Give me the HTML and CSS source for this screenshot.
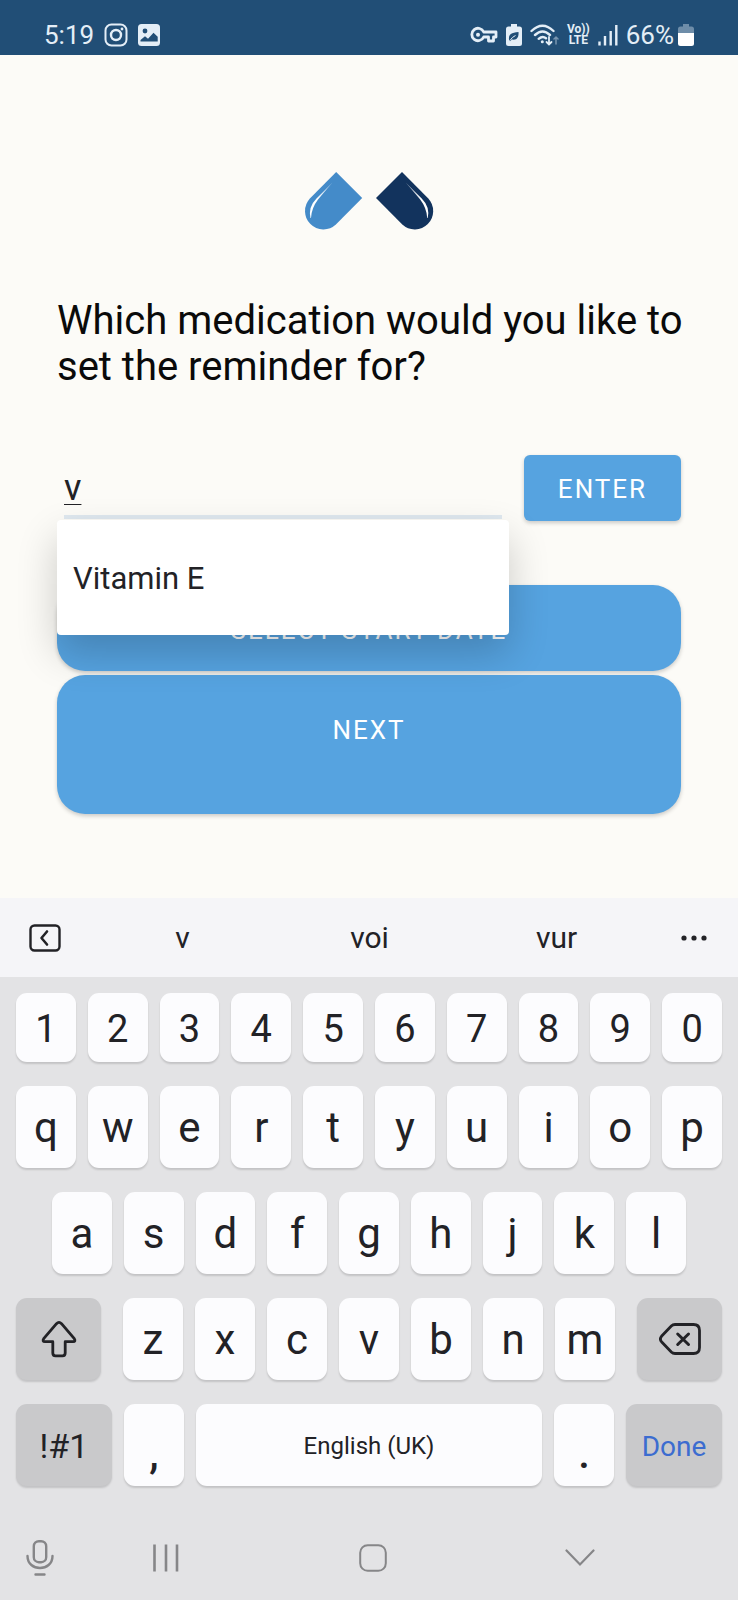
FILE: index.html
```html
<!DOCTYPE html>
<html lang="en">
<head>
<meta charset="utf-8">
<meta name="viewport" content="width=device-width, initial-scale=1">
<title>Medication reminder</title>
<link rel="stylesheet" href="styles.css">
</head>
<body>
<div class="phone">
  <header class="status">
    <div class="status-group">
      <span class="status-text">5:19</span>
      <svg class="status-insta" width="24" height="24" viewBox="0 0 24 24" fill="none" stroke="currentColor" stroke-width="2">
        <rect x="1.5" y="1.5" width="21" height="21" rx="6"/><circle cx="12" cy="12" r="5" stroke-width="2.4"/><circle cx="18" cy="6" r="1.4" fill="currentColor" stroke="none"/>
      </svg>
      <svg class="status-photo" width="22" height="22" viewBox="0 0 22 22">
        <rect width="22" height="22" rx="3.5" fill="currentColor"/>
        <circle cx="7" cy="7" r="2.4" fill="#214e76"/>
        <path d="M2.5 17.5v-1.500l4.500-3.800 3 2.600 5.500-6 4.200 4v4.700z" fill="#214e76"/>
      </svg>
    </div>
    <div class="status-group status-right">
      <svg width="28" height="18" viewBox="0 0 28 18" fill="none" stroke="currentColor" stroke-width="2.800" stroke-linejoin="round">
        <path d="M13.700 6H26v5h-2.500v4h-5v-4h-4.800A6.200 6.200 0 1 1 13.700 6z"/><circle cx="8" cy="8.700" r="2" fill="currentColor" stroke="none"/>
      </svg>
      <svg width="16" height="22" viewBox="0 0 16 22">
        <path d="M5 0h6v2.500h2.500q2.500 0 2.500 2.500v14.500q0 2.500-2.500 2.500h-11Q0 22 0 19.500V5Q0 2.500 2.500 2.500H5z" fill="currentColor"/>
        <path d="M3 15.500c-.6-5 2.500-7 9.500-7.500.5 5-1.500 8.500-6.500 7.600l-2 1.600z" fill="#214e76"/><path d="M4 16.500q2-3.500 5.500-5" fill="none" stroke="#e4eef7"/>
      </svg>
      <svg width="29" height="22" viewBox="0 0 29 22" fill="none" stroke="currentColor" stroke-width="2.400" stroke-linecap="round">
        <path d="M1.500 7Q12.500-3.500 23.500 7M5 11q7.500-7 15 0M8.700 14.800q3.800-3.400 7.300-.6"/><circle cx="12.300" cy="17.800" r="1.500" fill="currentColor" stroke="none"/>
        <path d="M19 13v7M16.500 18l2.500 2.500 2.500-2.500" stroke-width="1.800"/><path d="M26 20v-7M24 15l2-2 2 2" stroke-width="1.500" opacity=".45"/>
      </svg>
      <span class="volte"><span>Vo))</span><span>LTE</span></span>
      <svg width="20" height="22" viewBox="0 0 20 22" fill="none" stroke="currentColor" stroke-width="2.400">
        <path d="M1.500 21.500v-4M7 21.500V12M12.700 21.500V7M18.300 21.500V1"/>
      </svg>
      <span class="status-percent">66%</span>
      <svg class="status-battery" width="16" height="22" viewBox="0 0 16 22">
        <path d="M5 0h6v2.500h2.500q2.500 0 2.500 2.500v4H0V5Q0 2.500 2.500 2.500H5z" fill="currentColor" opacity=".4"/><path d="M0 9h16v10.500q0 2.500-2.500 2.500h-11Q0 22 0 19.500z" fill="#fff"/>
      </svg>
    </div>
  </header>

  <main class="screen">
    <svg class="logo" width="160" height="80" viewBox="0 0 160 80">
      <defs>
        <linearGradient id="shine" x1="1" y1="0" x2="0" y2=".6"><stop offset="0" stop-color="#fff" stop-opacity=".5"/><stop offset=".7" stop-color="#fff"/></linearGradient>
        <path id="half" d="M47.200 12L73.200 38 46.900 64.600A18.400 18.400 0 0 1 20.900 38.600z"/>
        <path id="gleam" d="M43.500 22.500L27.500 38.500Q19 47 21.500 58H22Q22.500 48 29 39.500z" fill="url(#shine)"/>
      </defs>
      <use href="#half" fill="#448bc9"/><use href="#gleam"/>
      <g transform="translate(160.200 0) scale(-1 1)"><use href="#half" fill="#12335d"/><use href="#gleam"/></g>
    </svg>

    <h1 class="question"><label for="medication">Which medication would you like to set the reminder for?</label></h1>

    <form class="form">
      <div class="entry">
        <div class="field">
          <input class="field-input" id="medication" type="text" value="v" autocomplete="off">
          <ul class="options"><li><button class="option" type="button">Vitamin E</button></li></ul>
        </div>
        <button class="button button-enter" type="button">ENTER</button>
      </div>
      <button class="button button-date" type="button">SELECT START DATE</button>
      <button class="button button-next" type="button">NEXT</button>
    </form>
  </main>

  <section class="keyboard" aria-label="Keyboard">
    <div class="suggestions">
      <button class="plain" type="button" aria-label="Show toolbar"><svg width="32" height="28" viewBox="0 0 32 28" fill="none" stroke="currentColor" stroke-width="2.400" stroke-linecap="round" stroke-linejoin="round"><rect x="1.500" y="1.500" width="29" height="25" rx="4"/><path d="M18 7.500L12.500 14l5.500 6.500" stroke-width="2.600"/></svg></button>
      <button class="plain" type="button">v</button>
      <button class="plain" type="button">voi</button>
      <button class="plain" type="button">vur</button>
      <button class="plain" type="button" aria-label="More"><svg width="26" height="6" viewBox="0 0 26 6" fill="currentColor"><circle cx="3" cy="3" r="2.600"/><circle cx="13" cy="3" r="2.600"/><circle cx="23" cy="3" r="2.600"/></svg></button>
    </div>
    <div class="keys">
      <div class="row row-digits">
        <button class="key">1</button><button class="key">2</button><button class="key">3</button><button class="key">4</button><button class="key">5</button><button class="key">6</button><button class="key">7</button><button class="key">8</button><button class="key">9</button><button class="key">0</button>
      </div>
      <div class="row">
        <button class="key">q</button><button class="key">w</button><button class="key">e</button><button class="key">r</button><button class="key">t</button><button class="key">y</button><button class="key">u</button><button class="key">i</button><button class="key">o</button><button class="key">p</button>
      </div>
      <div class="row row-home">
        <button class="key">a</button><button class="key">s</button><button class="key">d</button><button class="key">f</button><button class="key">g</button><button class="key">h</button><button class="key">j</button><button class="key">k</button><button class="key">l</button>
      </div>
      <div class="row row-shift">
        <button class="key key-dark key-shift" aria-label="Shift"><svg width="36" height="38" viewBox="0 0 36 38" fill="none" stroke="currentColor" stroke-width="2.800" stroke-linejoin="round"><path d="M15.500 3.700q2.500-2.700 5 0L33.300 18.700q1.700 2.800-1.300 3h-7.800V33q0 2.800-2.700 2.800h-7q-2.700 0-2.700-2.800V21.700H4q-3-.2-1.300-3z"/></svg></button>
        <button class="key">z</button><button class="key">x</button><button class="key">c</button><button class="key">v</button><button class="key">b</button><button class="key">n</button><button class="key">m</button>
        <button class="key key-dark key-delete" aria-label="Delete"><svg width="42" height="32" viewBox="0 0 42 32" fill="none" stroke="currentColor" stroke-width="2.800" stroke-linejoin="round" stroke-linecap="round"><path d="M16 1.500h18.500q6 0 6 6v17q0 6-6 6H16q-2.200 0-3.700-1.500L2.500 18.700q-2.200-2.700 0-5.400L12.300 3Q13.800 1.500 16 1.500z"/><path d="M18.700 11l10.800 10.500M29.500 11L18.700 21.500" stroke-width="3"/></svg></button>
      </div>
      <div class="row row-space">
        <button class="key key-dark key-symbols">!#1</button>
        <button class="key key-mark">,</button>
        <button class="key key-space">English (UK)</button>
        <button class="key key-mark">.</button>
        <button class="key key-dark key-done">Done</button>
      </div>
    </div>
    <nav class="nav">
      <button class="plain nav-mic" type="button" aria-label="Voice input"><svg width="28" height="36" viewBox="0 0 28 36" fill="none" stroke="currentColor" stroke-width="2.400" stroke-linecap="round"><rect x="7.800" y="1.200" width="12.400" height="21" rx="5"/><path d="M1.500 16c0 16 25 16 25 0M9.500 34.500h9"/></svg></button>
      <button class="plain" type="button" aria-label="Recent apps"><svg width="28" height="28" viewBox="0 0 28 28" stroke="currentColor" stroke-width="2.600"><path d="M2.500 .5v27M14 .5v27M25 .5v27"/></svg></button>
      <button class="plain" type="button" aria-label="Home"><svg width="28" height="28" viewBox="0 0 28 28" fill="none" stroke="currentColor" stroke-width="2"><rect x="1.200" y="1.200" width="25.600" height="25.600" rx="7.500"/></svg></button>
      <button class="plain" type="button" aria-label="Hide keyboard"><svg width="30" height="18" viewBox="0 0 30 18" fill="none" stroke="currentColor" stroke-width="2.200" stroke-linecap="round"><path d="M1.500 1.500L15 15.500 28.500 1.500"/></svg></button>
    </nav>
  </section>
</div>
</body>
</html>
```
FILE: styles.css
```css
* {
  box-sizing: border-box;
}

body {
  margin: 0;
  background: #fcfbf7;
  color: #222226;
  font-family: Roboto, "Noto Sans", sans-serif;
}

button,
input {
  margin: 0;
  padding: 0;
  border: 0;
  background: none;
  color: inherit;
  font: inherit;
}

svg {
  display: block;
  flex: none;
}

.phone {
  display: flex;
  flex-direction: column;
  min-height: 100vh;
}

/* Status bar */

.status {
  display: flex;
  justify-content: space-between;
  padding: 19px 44px 4px;
  background: #214e76;
  color: #e4eef7;
}

.status-group {
  display: flex;
  align-items: center;
  height: 32px;
  gap: 10px;
}

.status-right {
  gap: 8px;
}

.status-text,
.status-percent {
  font-size: 26px;
  line-height: 32px;
}

.status-battery {
  margin-left: -4px;
}

.volte {
  display: flex;
  flex-direction: column;
  align-items: center;
  font-size: 12px;
  font-weight: 700;
  line-height: 11px;
}

/* Reminder form */

.screen {
  display: flex;
  flex-direction: column;
  flex: 1;
  padding: 105px 57px 84px;
}

.logo {
  align-self: center;
}

.question {
  margin: 58px -6px 0 0;
  color: #0a0a0a;
  font-size: 40px;
  font-weight: 400;
  line-height: 46px;
}

.form {
  display: flex;
  flex-direction: column;
  margin-top: 65px;
}

.entry {
  display: flex;
  gap: 15px;
  height: 66px;
  margin-bottom: 64px;
}

.field {
  position: relative;
  flex: 1;
  padding: 0 7px;
}

.field-input {
  width: 100%;
  height: 64px;
  padding-top: 6px;
  border-bottom: 4px solid #dfe8ef;
  outline: 0;
  font-size: 36px;
  text-decoration: underline 1px;
  text-underline-offset: 4px;
}

.options {
  position: absolute;
  top: 65px;
  left: 0;
  right: 0;
  margin: 0;
  padding: 0;
  border-radius: 4px;
  background: #fff;
  box-shadow: 0 18px 40px rgba(0, 0, 0, 0.2);
  list-style: none;
}

.option {
  width: 100%;
  height: 115px;
  padding: 2px 16px 0;
  font-size: 31px;
  text-align: left;
}

.button {
  border-radius: 28px;
  background: #56a3e0;
  box-shadow: 0 2px 4px rgba(0, 0, 0, 0.2);
  color: #fff;
  font-size: 26px;
  letter-spacing: 2px;
}

.button-enter {
  width: 157px;
  padding-top: 2px;
  border-radius: 6px;
}

.button-date {
  height: 86px;
  padding-top: 4px;
}

.button-next {
  height: 139px;
  margin-top: 4px;
  padding-bottom: 30px;
}

/* Keyboard */

.keyboard {
  background: #e3e3e5;
}

.plain {
  display: flex;
  align-items: center;
  justify-content: center;
}

.suggestions {
  display: grid;
  grid-template-columns: 89fr 187fr 187fr 187fr 88fr;
  height: 79px;
  background: #f5f5f8;
  font-size: 30px;
}

.keys {
  display: grid;
  gap: 24px;
  padding: 16px 16px 0;
}

.row {
  display: grid;
  grid-template-columns: repeat(10, 1fr);
  gap: 12px;
  height: 82px;
}

.row-digits {
  height: 69px;
}

.row-home {
  grid-template-columns: repeat(9, 1fr);
  padding: 0 36px;
}

.row-shift {
  grid-template-columns: 95fr repeat(7, 60fr) 95fr;
}

.row-space {
  grid-template-columns: 96fr 60fr 346fr 60fr 96fr;
}

.key {
  display: flex;
  align-items: center;
  justify-content: center;
  min-width: 0;
  border-radius: 11px;
  background: #fcfcfe;
  box-shadow: 0 2px 2px rgba(0, 0, 0, 0.14);
  font-size: 42px;
}

.row-digits .key {
  padding-top: 2px;
  font-size: 38px;
}

.key-dark {
  background: #c9c9cb;
}

.key-shift {
  margin-right: 10px;
}

.key-delete {
  margin-left: 10px;
}

.key-symbols {
  padding-top: 2px;
  font-size: 34px;
}

.key-mark {
  padding-top: 16px;
  font-weight: 500;
}

.key-space {
  padding-top: 2px;
  font-size: 24px;
}

.key-done {
  padding-top: 2px;
  color: #3c6cd0;
  font-size: 28px;
}

.nav {
  display: grid;
  grid-template-columns: 62fr 207fr 207fr 207fr 55fr;
  height: 115px;
  padding-top: 28px;
  color: #868688;
}

.nav-mic {
  padding-left: 18px;
}
```
